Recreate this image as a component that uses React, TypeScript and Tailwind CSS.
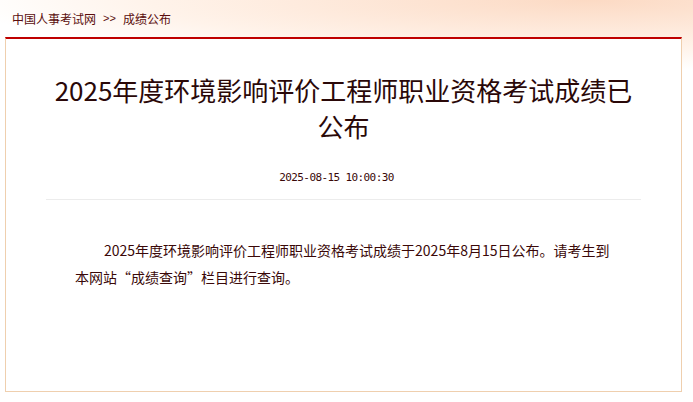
const cjk = "font-['Microsoft_YaHei','Noto_Sans_CJK_SC',sans-serif]"

export default function App() {
  return (
    <div
      className={`min-h-[402px] w-full bg-[radial-gradient(ellipse_90%_70px_at_85%_0%,#fcdac4,#fff3ea_70%,#ffffff)] pb-[10px] ${cjk}`}
    >
      {/* 面包屑 */}
      <div className="flex h-[37px] items-center pl-[12px] text-[12px] leading-none text-[#5a0d0d]">
        <span>中国人事考试网</span>
        <span className="mx-[7px] font-['Liberation_Sans',sans-serif] text-[11px]">&gt;&gt;</span>
        <span>成绩公布</span>
      </div>

      <div className="mx-[5px] w-[677px] border border-t-2 border-[#efcfae] border-t-[#bf0000] bg-white pt-[33px] h-[355px]">
        <h1 className="mx-auto w-[598px] text-center text-[26px] font-normal leading-[36px] text-[#2a0808]">
          2025年度环境影响评价工程师职业资格考试成绩已公布
        </h1>
        <div className="mt-[24px] pr-[14px] text-center font-['DejaVu_Sans_Mono',monospace] text-[11px] leading-[20px] tracking-[-0.6px] text-[#3a0808]">
          2025-08-15 10:00:30
        </div>
        <div className="mx-[40px] mt-[11px] h-px bg-[#ececec]" />
        <div className="mt-[37px] w-[535px] pl-[69px] box-content text-[14px] leading-[27px] text-[#3a0808]">
          <p className="indent-[29px]">
            2025年度环境影响评价工程师职业资格考试成绩于2025年8月15日公布。请考生到本网站“成绩查询”栏目进行查询。
          </p>
        </div>
      </div>
    </div>
  )
}
